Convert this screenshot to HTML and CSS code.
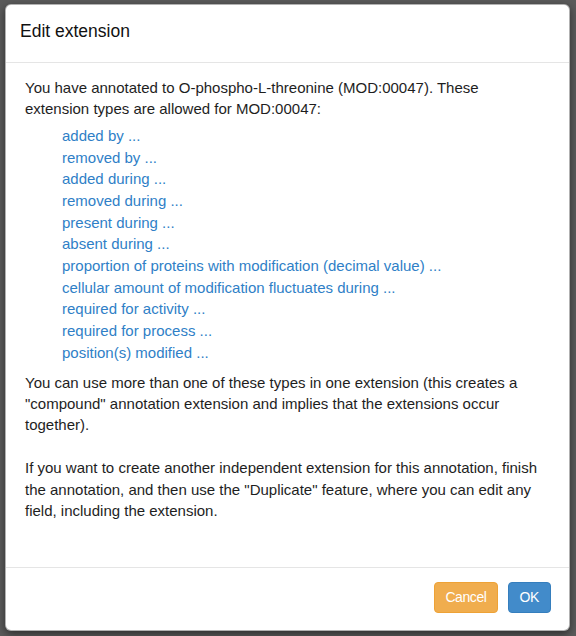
FILE: index.html
```html
<!DOCTYPE html>
<html>
<head>
<meta charset="utf-8">
<link rel="stylesheet" href="styles.css">
</head>
<body>
<div class="backdrop">
  <div class="modal">
    <div class="modal-header">
      <h4 class="modal-title">Edit extension</h4>
    </div>
    <div class="modal-body">
      <p class="intro">You have annotated to O-phospho-L-threonine (MOD:00047). These extension types are allowed for MOD:00047:</p>
      <ul class="types">
        <li><a href="#">added by ...</a></li>
        <li><a href="#">removed by ...</a></li>
        <li><a href="#">added during ...</a></li>
        <li><a href="#">removed during ...</a></li>
        <li><a href="#">present during ...</a></li>
        <li><a href="#">absent during ...</a></li>
        <li><a href="#">proportion of proteins with modification (decimal value) ...</a></li>
        <li><a href="#">cellular amount of modification fluctuates during ...</a></li>
        <li><a href="#">required for activity ...</a></li>
        <li><a href="#">required for process ...</a></li>
        <li><a href="#">position(s) modified ...</a></li>
      </ul>
      <p class="note">You can use more than one of these types in one extension (this creates a "compound" annotation extension and implies that the extensions occur together).</p>
      <p class="note">If you want to create another independent extension for this annotation, finish the annotation, and then use the "Duplicate" feature, where you can edit any field, including the extension.</p>
    </div>
    <div class="modal-footer">
      <button class="btn btn-warning">Cancel</button>
      <button class="btn btn-primary">OK</button>
    </div>
  </div>
</div>
</body>
</html>
```
FILE: styles.css
```css
* { box-sizing: border-box; }
html, body {
  margin: 0;
  padding: 0;
  height: 100%;
}
body {
  background: #5b5b5b;
  font-family: "Liberation Sans", Arial, Helvetica, sans-serif;
  font-size: 15px;
  line-height: 1.42857;
  color: #1e1e1e;
}
.backdrop {
  padding: 4px 6px 0 5px;
}
.modal {
  background: #fff;
  border: 1px solid rgba(0,0,0,0.3);
  border-radius: 6px;
  box-shadow: 0 3px 9px rgba(0,0,0,0.5);
  display: flex;
  flex-direction: column;
}
.modal-header {
  padding: 15px 14px 20px 14px;
  border-bottom: 1px solid #e5e5e5;
}
.modal-title {
  margin: 0;
  font-size: 17.5px;
  line-height: 22px;
  font-weight: 500;
  color: #111;
}
.modal-body {
  padding: 14px 26px 45px 19px;
}
.modal-body p {
  margin: 0;
}
.modal-body .intro {
  margin-bottom: 5px;
}
.types {
  list-style: none;
  margin: 0 0 8px 0;
  padding: 0 0 0 37px;
  line-height: 21.7px;
}
.types a {
  color: #2f7fc7;
  text-decoration: none;
}
.modal-body .note + .note {
  margin-top: 21.5px;
}
.modal-footer {
  border-top: 1px solid #e5e5e5;
  padding: 14px 18px 17px 15px;
  display: flex;
  justify-content: flex-end;
  gap: 10px;
}
.btn {
  font-family: "Liberation Sans", Arial, Helvetica, sans-serif;
  font-size: 14px;
  letter-spacing: -0.4px;
  line-height: 19px;
  padding: 5px 10px;
  border-radius: 4px;
  border: 1px solid transparent;
  color: #fff;
  cursor: pointer;
}
.btn-warning {
  background: #f0ad4e;
  border-color: #eea236;
}
.btn-primary {
  background: #428bca;
  border-color: #357ebd;
  padding: 5px 11px;
}
```
